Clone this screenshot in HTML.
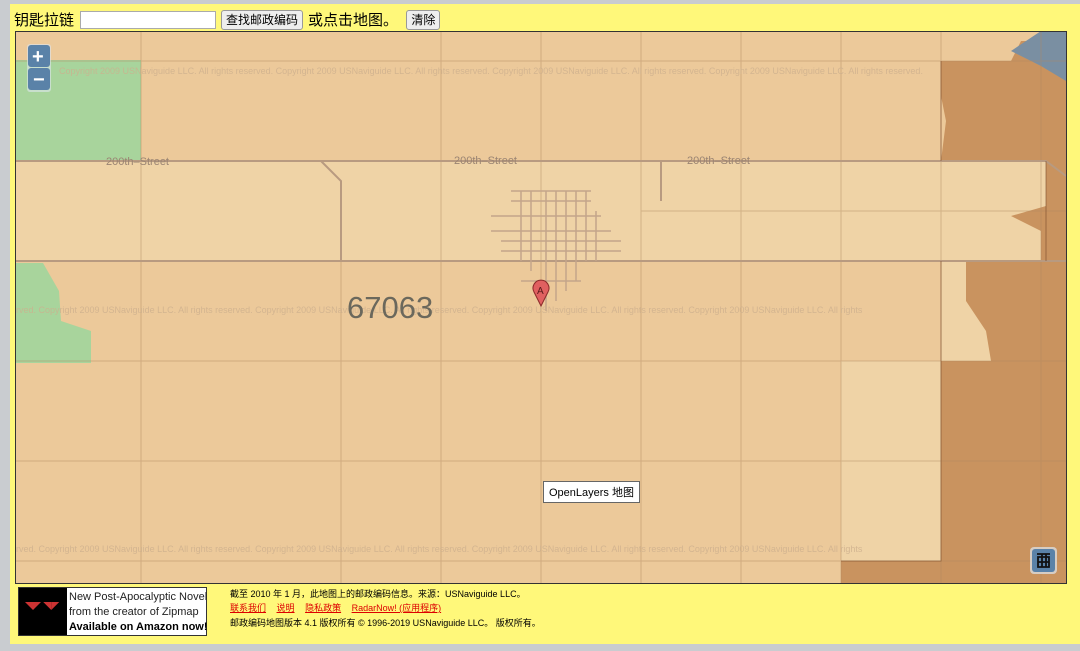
<!DOCTYPE html>
<html><head><meta charset="utf-8"><style>
body{margin:0;width:1080px;height:651px;background:#c9ccd0;overflow:hidden;font-family:"Liberation Sans","Noto Sans CJK SC",sans-serif}
#pg{position:absolute;left:10px;top:4px;width:1070px;height:640px;background:#fff87a}
.top{position:absolute;left:4px;top:5px;font-size:15px;color:#000;display:flex;align-items:center;white-space:nowrap}
input{width:134px;height:16px;border:1px solid #aaa;margin:0 5px 0 6px;padding:0}
button{font:12px "Liberation Sans","Noto Sans CJK SC",sans-serif;padding:0 4px;border:1px solid #999;border-radius:3px;background:#eee;margin-right:5px;height:20px}
#map{position:absolute;left:5px;top:27px;width:1050px;height:551px;border:1px solid #333;overflow:hidden;background:#ecc99a}
.ft{position:absolute;left:220px;font-size:9px;color:#000}
.ft a{color:#d00;text-decoration:underline;margin-right:8px}
</style></head><body>
<div id="pg">
<div class="top">钥匙拉链<input><button>查找邮政编码</button>或点击地图。&nbsp;&nbsp;<button>清除</button></div>
<div id="map">
<svg width="1050" height="551" viewBox="15 31 1050 551" style="position:absolute;left:0;top:0">
<rect x="15" y="31" width="1050" height="551" fill="#ecc99a"/>
<path d="M15 160 L1045 160 L1045 260 L15 260Z" fill="#efd3a6"/>
<path d="M940 260 L1045 260 L1045 360 L940 360Z" fill="#efd3a6"/>
<path d="M840 360 L940 360 L940 560 L840 560Z" fill="#efd3a6"/>
<path d="M15 59 L140 59 L140 160 L15 160Z" fill="#a8d49c"/>
<path d="M15 262 L42 262 L58 290 L60 320 L90 330 L90 362 L15 362Z" fill="#a8d49c"/>
<path d="M940 60 L1010 60 L1020 40 L1065 40 L1065 160 L940 160 L945 120 L940 95Z" fill="#c9935f"/>
<path d="M1040 30 L1065 30 L1065 80 L1040 65 L1010 50Z" fill="#7a8fa2"/>
<path d="M1045 160 L1065 160 L1065 260 L1040 260 L1040 230 L1010 215 L1045 205Z" fill="#c9935f"/>
<path d="M965 260 L1065 260 L1065 582 L840 582 L840 560 L940 560 L940 360 L990 360 L985 330 L965 300Z" fill="#c9935f"/>
<g stroke="#b08860" stroke-width="1" fill="none" opacity="0.45">
<path d="M140 31V582M440 31V582M540 31V582M640 31V582M740 31V582M840 31V582M940 31V582M1040 31V582M340 260V582"/>
<path d="M15 60H1065M15 360H1065M15 460H1065M15 560H1065M640 210H1065"/>
</g>
<g stroke="#b89a80" stroke-width="2" fill="none">
<path d="M15 160H1045 L1065 175M15 260H1065M320 160L340 180V260M660 160V200"/>
</g>
<g stroke="#c4a58a" stroke-width="1.5" fill="none">
<path d="M510 190H590M510 200H590M490 215H600M490 230H610M500 240H620M500 250H620M520 280H580M520 190V260M530 190V270M545 190V310M555 190V300M565 190V290M575 190V280M585 190V260M595 210V260"/>
</g>
<g stroke="#7a4a2a" stroke-width="1" fill="none" opacity="0.6">
<path d="M940 60V160M940 260V360M840 560H940V360M1045 160V260"/>
</g>
<g font-size="9" fill="#cdb08e" font-family="Liberation Sans" opacity="0.8">
<text x="58" y="73">Copyright 2009 USNaviguide LLC. All rights reserved.   Copyright 2009 USNaviguide LLC. All rights reserved.   Copyright 2009 USNaviguide LLC. All rights reserved.   Copyright 2009 USNaviguide LLC. All rights reserved.</text>
<text x="15" y="312">rved.   Copyright 2009 USNaviguide LLC. All rights reserved.   Copyright 2009 USNaviguide LLC. All rights reserved.   Copyright 2009 USNaviguide LLC. All rights reserved.   Copyright 2009 USNaviguide LLC. All rights</text>
<text x="15" y="551">rved.   Copyright 2009 USNaviguide LLC. All rights reserved.   Copyright 2009 USNaviguide LLC. All rights reserved.   Copyright 2009 USNaviguide LLC. All rights reserved.   Copyright 2009 USNaviguide LLC. All rights</text>
</g>
<g font-size="11" fill="#9a8472" font-family="Liberation Sans">
<text x="105" y="164">200th–Street</text><text x="453" y="163">200th–Street</text><text x="686" y="163">200th–Street</text>
</g>
<text x="346" y="317" font-size="31" fill="#6b685c" font-family="Liberation Sans">67063</text>
<path d="M540 305 L533 291 A8 8 0 1 1 547 291Z" fill="#e06060" stroke="#8a2a2a"/>
<text x="536" y="293" font-size="10" fill="#5a1a1a" font-family="Liberation Sans">A</text>
<rect x="26" y="43" width="24" height="48" rx="3" fill="#dde6ee" opacity=".6"/>
<rect x="27" y="44" width="22" height="22" rx="3" fill="#5a82a8"/>
<rect x="27" y="67" width="22" height="22" rx="3" fill="#5a82a8"/>
<text x="31" y="62" font-size="20" font-weight="bold" fill="#fff" font-family="Liberation Sans">+</text>
<text x="32" y="85" font-size="20" font-weight="bold" fill="#fff" font-family="Liberation Sans">−</text>
<rect x="1029" y="546" width="27" height="27" rx="4" fill="#dde6ee" opacity=".7"/>
<rect x="1031" y="548" width="23" height="23" rx="3" fill="#5a82a8"/>
<path d="M1036 553H1049M1037 556H1048V566H1037ZM1037 561H1048M1041 553V566M1045 553V566" stroke="#111" stroke-width="1.8" fill="none"/>
</svg>
<div style="position:absolute;left:527px;top:449px;background:#fff;border:1px solid #666;font-size:11px;padding:2px 5px">OpenLayers 地图</div>
</div>
<div style="position:absolute;left:8px;top:583px;width:187px;height:47px;border:1px solid #333;background:#fff">
<div style="position:absolute;left:0;top:0;width:48px;height:47px;background:#000"><span style="position:absolute;left:6px;top:13px;color:#c33;font-size:8px">◥◤ ◥◤</span></div>
<div style="position:absolute;left:50px;top:2px;font-size:11px;line-height:15px;color:#222;white-space:nowrap">New Post-Apocalyptic Novel<br>from the creator of Zipmap<br><b style="color:#000">Available on Amazon now!</b></div>
</div>
<div class="ft" style="top:583px">截至 2010 年 1 月，此地图上的邮政编码信息。来源：USNaviguide LLC。</div>
<div class="ft" style="top:597px"><a>联系我们</a> <a>说明</a> <a>隐私政策</a> <a>RadarNow! (应用程序)</a></div>
<div class="ft" style="top:612px">邮政编码地图版本 4.1 版权所有 © 1996-2019 USNaviguide LLC。 版权所有。</div>
</div>
</body></html>
